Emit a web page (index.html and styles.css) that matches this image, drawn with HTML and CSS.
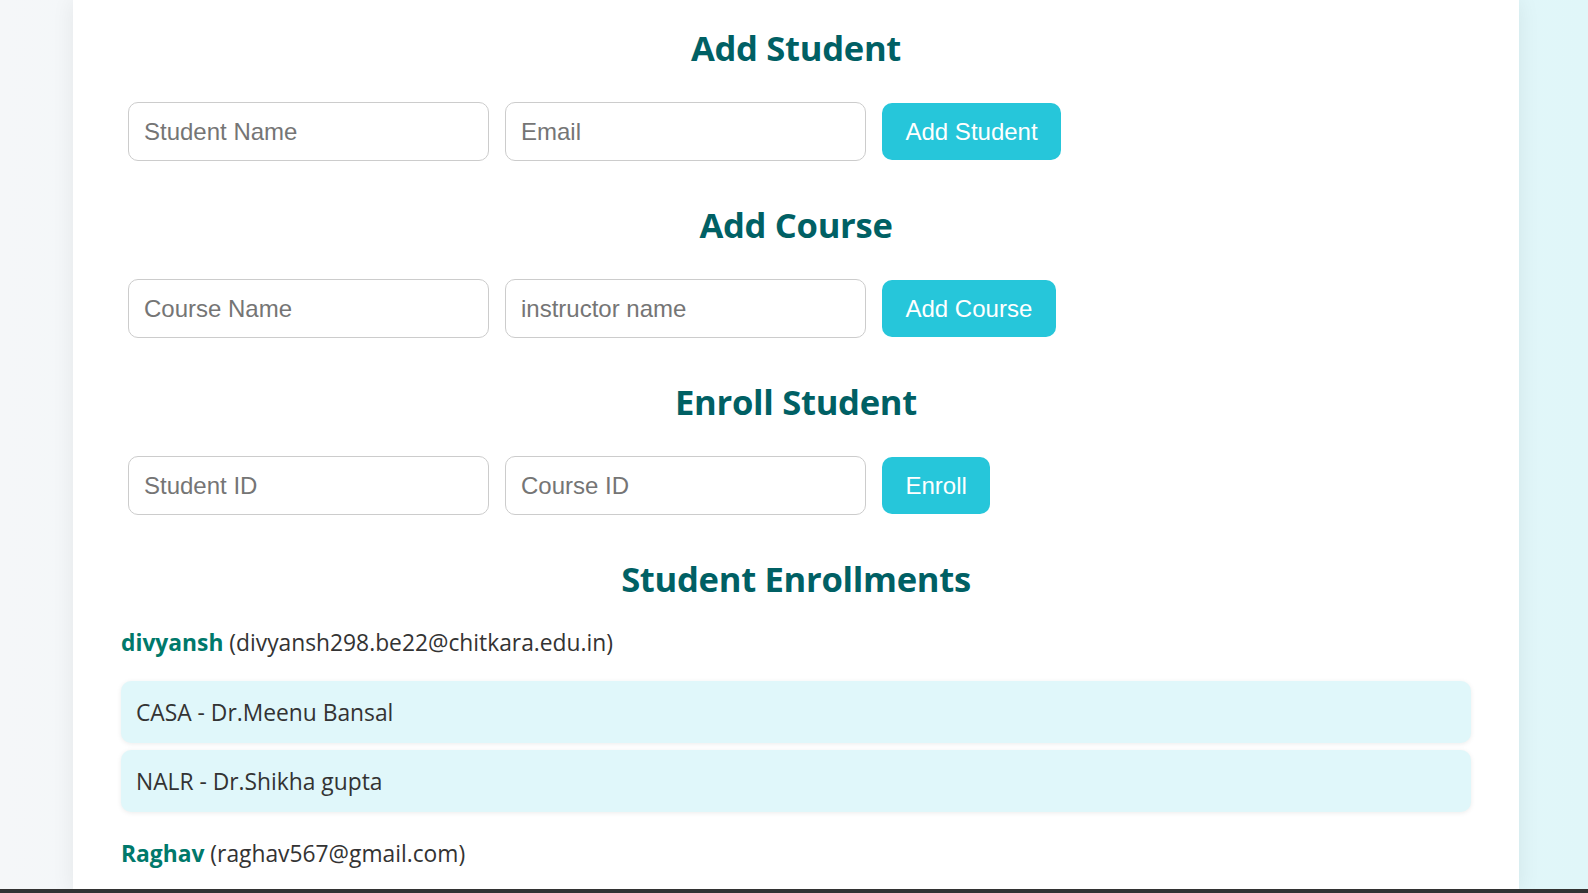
FILE: index.html
```html
<!DOCTYPE html>
<html lang="en">
<head>
<meta charset="utf-8">
<title>Student Course Enrollment</title>
<link rel="stylesheet" href="styles.css">
</head>
<body>
<main class="card">
  <section class="block">
    <h2 class="title">Add Student</h2>
    <form class="row">
      <input class="field" type="text" placeholder="Student Name">
      <input class="field" type="text" placeholder="Email">
      <button class="btn" type="button">Add Student</button>
    </form>
  </section>
  <section class="block">
    <h2 class="title">Add Course</h2>
    <form class="row">
      <input class="field" type="text" placeholder="Course Name">
      <input class="field" type="text" placeholder="instructor name">
      <button class="btn" type="button">Add Course</button>
    </form>
  </section>
  <section class="block">
    <h2 class="title">Enroll Student</h2>
    <form class="row">
      <input class="field" type="text" placeholder="Student ID">
      <input class="field" type="text" placeholder="Course ID">
      <button class="btn" type="button">Enroll</button>
    </form>
  </section>
  <section class="enrollments">
    <h2 class="title">Student Enrollments</h2>
    <div class="student">
      <p class="student-line"><strong class="name">divyansh</strong> (divyansh298.be22@chitkara.edu.in)</p>
      <ul class="courses">
        <li class="course">CASA - Dr.Meenu Bansal</li>
        <li class="course">NALR - Dr.Shikha gupta</li>
      </ul>
    </div>
    <div class="student">
      <p class="student-line"><strong class="name">Raghav</strong> (raghav567@gmail.com)</p>
    </div>
  </section>
</main>
<div class="bottom-bar"></div>
</body>
</html>
```

FILE: styles.css
```css
* {
  box-sizing: border-box;
}

html, body {
  height: 100%;
}

body {
  margin: 0;
  overflow: hidden;
  background: linear-gradient(to right, #f5f7f9, #e0f6f9);
  font-family: "Open Sans", "Noto Sans", sans-serif;
  color: #333333;
}

.card {
  width: 1446px;
  min-height: 100%;
  margin-left: 73px;
  background: #ffffff;
  box-shadow: 0 0 22px rgba(0, 0, 0, 0.07);
  padding: 26px 48px 0;
  display: flex;
  flex-direction: column;
}

.block {
  display: flex;
  flex-direction: column;
}

.title {
  margin: 0 0 32px;
  font-family: "Open Sans", "Noto Sans", sans-serif;
  font-weight: 700;
  font-size: 34.6px;
  line-height: 44px;
  color: #006064;
  text-align: center;
  letter-spacing: -0.3px;
}

.row {
  display: flex;
  align-items: center;
  gap: 16px;
  margin: 0 0 42px 7px;
}

.field {
  width: 361px;
  height: 59px;
  border: 1px solid #cccccc;
  border-radius: 10px;
  padding: 0 15px;
  font-family: "Liberation Sans", Arial, sans-serif;
  font-size: 24px;
  color: #333333;
  background: #ffffff;
  outline: none;
}

.field::placeholder {
  color: #757575;
}

.btn {
  height: 57px;
  border: none;
  border-radius: 10px;
  padding: 0 23.5px;
  background: #26c6da;
  color: #ffffff;
  font-family: "Liberation Sans", Arial, sans-serif;
  font-size: 24px;
}

.enrollments {
  display: flex;
  flex-direction: column;
}

.enrollments .title {
  margin-bottom: 27px;
}

.student-line {
  margin: 0;
  font-size: 22.8px;
  line-height: 30px;
}

.name {
  color: #00796b;
  font-weight: 700;
}

.courses {
  list-style: none;
  margin: 23px 0 27px;
  padding: 0;
  display: flex;
  flex-direction: column;
  gap: 7px;
}

.course {
  height: 62px;
  padding: 0 15px;
  display: flex;
  align-items: center;
  background: #e0f7fa;
  border-radius: 10px;
  box-shadow: 0 1px 5px rgba(0, 0, 0, 0.08);
  font-size: 22.8px;
}

.bottom-bar {
  position: fixed;
  left: 0;
  right: 0;
  bottom: 0;
  height: 4px;
  background: #333333;
}
```
